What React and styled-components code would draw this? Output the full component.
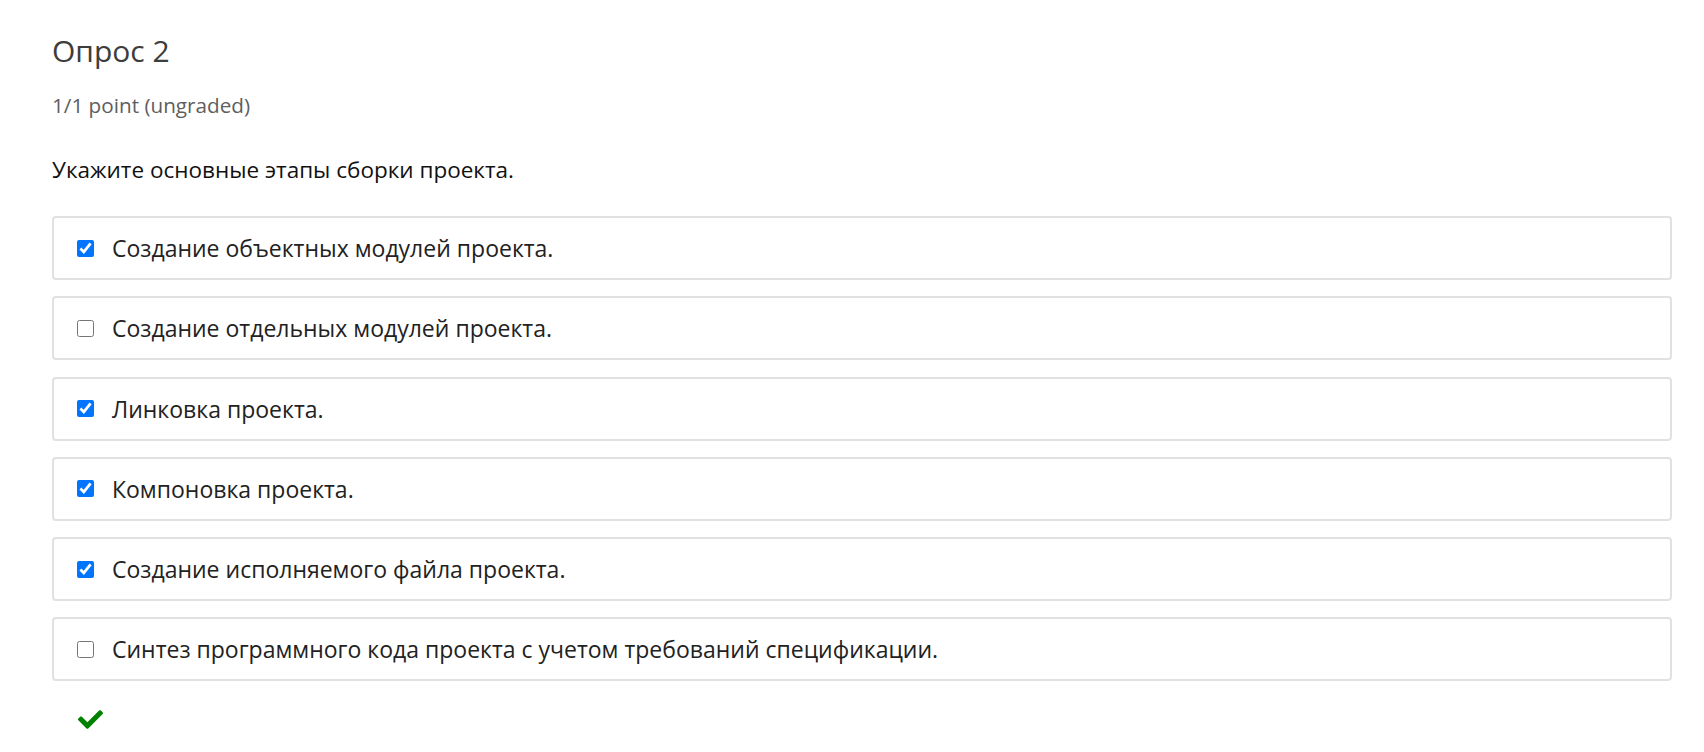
import React from "react";
import styled, { createGlobalStyle } from "styled-components";
import { FaCheck } from "react-icons/fa";

const Global = createGlobalStyle`
  html, body { margin: 0; padding: 0; background: #fff; }
  body { font-family: "Open Sans", "Noto Sans", sans-serif; }
`;

const Page = styled.main`
  padding: 33px 32px 20px 52px;
`;

const Title = styled.h2`
  margin: 0;
  font-size: 30px;
  font-weight: 400;
  line-height: 36px;
  color: #3d3d3d;
`;

const Points = styled.div`
  margin-top: 22px;
  font-size: 20.7px;
  line-height: 28px;
  color: #5e5e5e;
`;

const Question = styled.p`
  margin: 36px 0 31px;
  font-size: 22.5px;
  line-height: 30px;
  color: #111;
`;

const Options = styled.div`
  display: flex;
  flex-direction: column;
  gap: 16.3px;
`;

const Option = styled.label`
  display: flex;
  align-items: center;
  gap: 18px;
  height: 64px;
  box-sizing: border-box;
  padding: 0 23px;
  border: 2px solid #e1e1e1;
  border-radius: 4px;
  font-size: 23px;
  color: #222;
`;

const Box = styled.input`
  width: 17px;
  height: 17px;
  margin: 0;
  flex: none;
  accent-color: #0075ff;
`;

const Status = styled.div`
  margin: 26px 0 0 26px;
  height: 24px;
  display: flex;
  align-items: center;
  color: #008100;
  font-size: 25px;
`;

const options = [
  ["Создание объектных модулей проекта.", true],
  ["Создание отдельных модулей проекта.", false],
  ["Линковка проекта.", true],
  ["Компоновка проекта.", true],
  ["Создание исполняемого файла проекта.", true],
  ["Синтез программного кода проекта с учетом требований спецификации.", false],
];

export default function App() {
  return (
    <Page>
      <Global />
      <Title>Опрос 2</Title>
      <Points>1/1 point (ungraded)</Points>
      <Question>Укажите основные этапы сборки проекта.</Question>
      <Options>
        {options.map(([text, checked]) => (
          <Option key={text}>
            <Box type="checkbox" defaultChecked={checked} />
            {text}
          </Option>
        ))}
      </Options>
      <Status>
        <FaCheck />
      </Status>
    </Page>
  );
}
